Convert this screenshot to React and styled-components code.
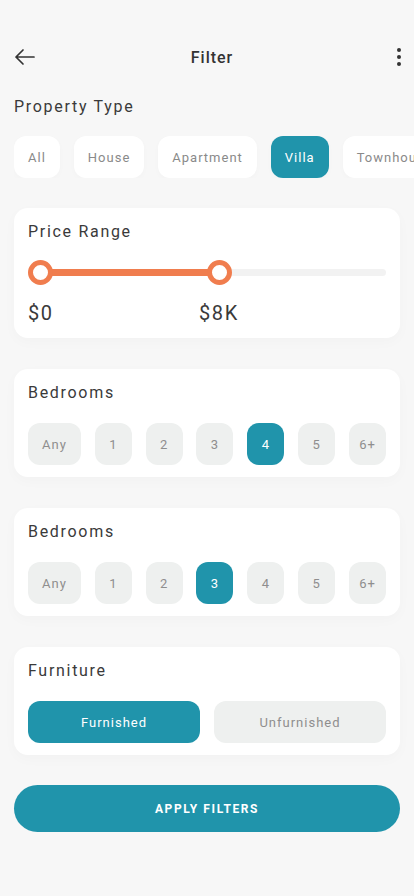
import React from "react";
import styled, { createGlobalStyle } from "styled-components";

const TEAL = "#2094ab";
const ORANGE = "#f07d4e";

const GlobalStyle = createGlobalStyle`
  html, body { margin: 0; padding: 0; background: #f7f7f7; }
  body { font-family: Roboto, "Liberation Sans", sans-serif; }
  * { box-sizing: border-box; }
`;

const Screen = styled.div`
  width: 414px;
  min-height: 896px;
  background: #f7f7f7;
  padding: 38px 14px 40px;
  display: flex;
  flex-direction: column;
  overflow: hidden;
`;

const Header = styled.div`
  display: flex;
  align-items: center;
  justify-content: space-between;
  height: 38px;
  margin: 0 -12px 0 -2px;
`;

const Title = styled.h1`
  margin: 0;
  font-size: 16px;
  font-weight: 500;
  letter-spacing: 1px;
  color: #333;
`;

const IconButton = styled.button`
  border: none;
  background: none;
  padding: 0;
  width: 26px;
  height: 26px;
  display: flex;
  align-items: center;
  justify-content: center;
  color: #333;
`;

const SectionTitle = styled.h2`
  margin: 0;
  font-size: 16px;
  font-weight: 400;
  letter-spacing: 1.7px;
  color: #3a3a3a;
  line-height: 20px;
`;

const TypeSection = styled.div`
  margin-top: 21px;
`;

const ChipRow = styled.div`
  display: flex;
  gap: 14px;
  margin-top: 19px;
  margin-right: -14px;
  overflow: hidden;
`;

const Chip = styled.button`
  flex-shrink: 0;
  height: 42px;
  padding: 0 ${(p) => p.$pad}px;
  border: none;
  border-radius: 12px;
  background: ${(p) => (p.$active ? TEAL : "#fff")};
  color: ${(p) => (p.$active ? "#fff" : "#8a8a8a")};
  font-family: inherit;
  font-size: 13px;
  letter-spacing: 1px;
  box-shadow: 0 2px 6px rgba(0, 0, 0, 0.02);
`;

const Card = styled.div`
  background: #fff;
  border-radius: 14px;
  padding: 14px 14px 12px;
  margin-top: ${(p) => p.$mt}px;
  box-shadow: 0 4px 14px rgba(0, 0, 0, 0.025);
`;

const SliderWrap = styled.div`
  position: relative;
  height: 24px;
  margin-top: 18px;
`;

const Track = styled.div`
  position: absolute;
  left: 0;
  right: 0;
  top: 9px;
  height: 7px;
  border-radius: 4px;
  background: #f2f2f2;
`;

const Fill = styled.div`
  position: absolute;
  top: 9px;
  height: 7px;
  background: ${ORANGE};
`;

const Thumb = styled.div`
  position: absolute;
  top: 0;
  width: 25px;
  height: 25px;
  margin-left: -12px;
  border-radius: 50%;
  border: 5px solid ${ORANGE};
  background: #fff;
`;

const PriceLabels = styled.div`
  position: relative;
  height: 24px;
  margin-top: 17px;
  margin-bottom: 1px;
`;

const Price = styled.span`
  position: absolute;
  top: 0;
  font-size: 20px;
  letter-spacing: 1.6px;
  color: #3a3a3a;
`;

const OptionRow = styled.div`
  display: flex;
  justify-content: space-between;
  margin-top: 20px;
`;

const Option = styled.button`
  height: 42px;
  width: ${(p) => p.$w}px;
  border: none;
  border-radius: 12px;
  background: ${(p) => (p.$active ? TEAL : "#eef0ef")};
  color: ${(p) => (p.$active ? "#fff" : "#8e8e8e")};
  font-family: inherit;
  font-size: 13px;
  letter-spacing: 1px;
  padding: 0;
`;

const FurnRow = styled.div`
  display: grid;
  grid-template-columns: 1fr 1fr;
  gap: 14px;
  margin-top: 20px;
`;

const ApplyButton = styled.button`
  margin-top: 30px;
  height: 47px;
  border: none;
  border-radius: 24px;
  background: ${TEAL};
  color: #fff;
  font-family: inherit;
  font-size: 12px;
  font-weight: 700;
  letter-spacing: 1.6px;
`;

const types = [
  { label: "All", pad: 14 },
  { label: "House", pad: 14 },
  { label: "Apartment", pad: 14 },
  { label: "Villa", pad: 14, active: true },
  { label: "Townhouse", pad: 14 },
];

const counts = ["Any", "1", "2", "3", "4", "5", "6+"];

function CountRow({ selected }) {
  return (
    <OptionRow>
      {counts.map((c) => (
        <Option key={c} $w={c === "Any" ? 53 : 37} $active={c === selected}>
          {c}
        </Option>
      ))}
    </OptionRow>
  );
}

export default function App() {
  return (
    <>
      <GlobalStyle />
      <Screen>
        <Header>
          <IconButton>
            <svg width="24" height="24" viewBox="0 0 24 24" fill="none" stroke="#333" strokeWidth="1.7" strokeLinecap="round" strokeLinejoin="round">
              <path d="M21 12H3M10 5l-7 7 7 7" />
            </svg>
          </IconButton>
          <Title>Filter</Title>
          <IconButton>
            <svg width="6" height="20" viewBox="0 0 6 20" fill="#333">
              <circle cx="3" cy="3" r="2" />
              <circle cx="3" cy="10" r="2" />
              <circle cx="3" cy="17" r="2" />
            </svg>
          </IconButton>
        </Header>

        <TypeSection>
          <SectionTitle>Property Type</SectionTitle>
          <ChipRow>
            {types.map((t) => (
              <Chip key={t.label} $pad={t.pad} $active={t.active}>
                {t.label}
              </Chip>
            ))}
          </ChipRow>
        </TypeSection>

        <Card $mt={30}>
          <SectionTitle>Price Range</SectionTitle>
          <SliderWrap>
            <Track />
            <Fill style={{ left: 12, width: 179 }} />
            <Thumb style={{ left: 12 }} />
            <Thumb style={{ left: 191 }} />
          </SliderWrap>
          <PriceLabels>
            <Price style={{ left: 0 }}>$0</Price>
            <Price style={{ left: 171 }}>$8K</Price>
          </PriceLabels>
        </Card>

        <Card $mt={31}>
          <SectionTitle>Bedrooms</SectionTitle>
          <CountRow selected="4" />
        </Card>

        <Card $mt={31}>
          <SectionTitle>Bedrooms</SectionTitle>
          <CountRow selected="3" />
        </Card>

        <Card $mt={31}>
          <SectionTitle>Furniture</SectionTitle>
          <FurnRow>
            <Option $active>Furnished</Option>
            <Option>Unfurnished</Option>
          </FurnRow>
        </Card>

        <ApplyButton>APPLY FILTERS</ApplyButton>
      </Screen>
    </>
  );
}
